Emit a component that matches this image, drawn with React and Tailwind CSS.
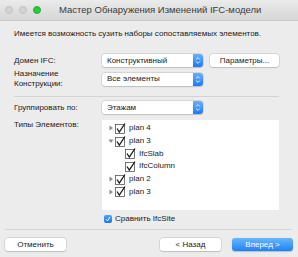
import React from "react";

const F = { fontFamily: '"Liberation Sans", Arial, sans-serif' };

function Stepper() {
  return (
    <div className="h-full w-[10px] rounded-r-[3px] bg-gradient-to-b from-[#69b1fa] to-[#1a78f5] flex items-center justify-center">
      <svg width="6" height="9" viewBox="0 0 6 9">
        <path d="M1.2 3.4 L3 1.6 L4.8 3.4" stroke="white" strokeWidth="0.9" fill="none" />
        <path d="M1.2 5.6 L3 7.4 L4.8 5.6" stroke="white" strokeWidth="0.9" fill="none" />
      </svg>
    </div>
  );
}

function Select({ text }) {
  return (
    <div className="flex h-[13px] w-[101px] items-center rounded-[3px] bg-white shadow-[0_0_0_0.5px_#c4c4c4,0_0.5px_1px_rgba(0,0,0,0.2)]">
      <div className="flex-1 pl-[5px] text-[8px] leading-none text-[#222]">{text}</div>
      <Stepper />
    </div>
  );
}

function TreeCheck() {
  return (
    <svg width="11" height="11" viewBox="0 0 11 11" className="shrink-0">
      <rect x="0.5" y="1.5" width="9" height="9" fill="white" stroke="#555" strokeWidth="0.8" />
      <path d="M2 5.5 L4.3 9 L10 0.5" stroke="#1a1a1a" strokeWidth="1.3" fill="none" />
    </svg>
  );
}

function Arrow({ open }) {
  return (
    <svg width="6" height="6" viewBox="0 0 6 6" className="shrink-0">
      {open ? (
        <path d="M0.5 1.5 L5.5 1.5 L3 5 Z" fill="#8a8a8a" />
      ) : (
        <path d="M1.5 0.5 L5 3 L1.5 5.5 Z" fill="#8a8a8a" />
      )}
    </svg>
  );
}

function Row({ open, label, child }) {
  return (
    <div className={`flex h-[12.7px] items-center ${child ? "pl-[23px]" : "pl-[6px]"}`}>
      {!child && <Arrow open={open} />}
      <div className={child ? "" : "ml-[1px]"}>
        <TreeCheck />
      </div>
      <span className="ml-[3px] text-[8px] leading-none text-[#222]">{label}</span>
    </div>
  );
}

function Btn({ children, className = "" }) {
  return (
    <div
      className={`flex h-[13px] w-[61px] items-center justify-center rounded-[3px] bg-white text-[8px] leading-none text-[#222] shadow-[0_0_0_0.5px_#c4c4c4,0_0.5px_1px_rgba(0,0,0,0.2)] ${className}`}
    >
      {children}
    </div>
  );
}

export default function App() {
  return (
    <div style={F} className="h-[257px] w-[298px] overflow-hidden bg-[#ececec]">
      {/* title bar */}
      <div className="flex h-[21px] items-center bg-gradient-to-b from-[#ebebeb] to-[#d6d6d6] border-b border-[#c8c8c8]">
        <div className="ml-[5px] flex gap-[6px]">
          <div className="h-[8px] w-[8px] rounded-full bg-[#d3d3d3] border border-[#c2c2c2]" />
          <div className="h-[8px] w-[8px] rounded-full bg-[#d3d3d3] border border-[#c2c2c2]" />
          <div className="h-[8px] w-[8px] rounded-full bg-[#2ac940] border border-[#22b436]" />
        </div>
        <div className="ml-[18px] text-[9.5px] leading-none text-[#3a3a3a]">
          Мастер Обнаружения Изменений IFC-модели
        </div>
      </div>

      <div className="pl-[14px] pt-[8px] text-[8px] leading-[9px] text-[#1a1a1a]">
        Имеется возможность сузить наборы сопоставляемых элементов.
      </div>

      {/* row 1 */}
      <div className="mt-[16px] flex items-center pl-[14px]">
        <div className="w-[88px] text-[8px] leading-none text-[#1a1a1a]">Домен IFC:</div>
        <Select text="Конструктивный" />
        <Btn className="ml-[7px] w-[69px]">Параметры...</Btn>
      </div>

      {/* row 2 */}
      <div className="mt-[2px] flex items-center pl-[14px]">
        <div className="w-[88px] text-[8px] leading-[10px] text-[#1a1a1a]">
          Назначение
          <br />
          Конструкции:
        </div>
        <Select text="Все элементы" />
      </div>

      <div className="mx-[14px] mt-[7px] h-px bg-[#d4d4d4] w-[265px]" />

      {/* row 3 */}
      <div className="mt-[4px] flex items-center pl-[14px]">
        <div className="w-[88px] text-[8px] leading-none text-[#1a1a1a]">Группировать по:</div>
        <Select text="Этажам" />
      </div>

      {/* tree */}
      <div className="mt-[6px] flex pl-[14px]">
        <div className="w-[88px] pt-[1px] text-[8px] leading-none text-[#1a1a1a]">Типы Элементов:</div>
        <div className="h-[90px] w-[177px] bg-white pt-[2px]">
          <Row label="plan 4" />
          <Row label="plan 3" open />
          <Row label="IfcSlab" child />
          <Row label="IfcColumn" child />
          <Row label="plan 2" />
          <Row label="plan 3" />
        </div>
      </div>

      {/* compare */}
      <div className="mt-[5px] flex items-center pl-[104px]">
        <div className="flex h-[8px] w-[8px] items-center justify-center rounded-[2px] bg-gradient-to-b from-[#4aa3fb] to-[#1677f3]">
          <svg width="6" height="6" viewBox="0 0 6 6">
            <path d="M1 3.2 L2.5 4.8 L5 1" stroke="white" strokeWidth="1" fill="none" />
          </svg>
        </div>
        <span className="ml-[3px] text-[8px] leading-none text-[#1a1a1a]">Сравнить IfcSite</span>
      </div>

      <div className="ml-[5px] mt-[6px] h-px w-[287px] bg-[#d4d4d4]" />

      {/* buttons */}
      <div className="mt-[8px] flex items-center pl-[5px]">
        <Btn>Отменить</Btn>
        <Btn className="ml-[94px]">&lt; Назад</Btn>
        <div className="ml-[11px] flex h-[13px] w-[61px] items-center justify-center rounded-[3px] bg-gradient-to-b from-[#67b5fb] to-[#1b82fa] text-[8px] leading-none text-white shadow-[0_0.5px_1px_rgba(0,0,0,0.2)]">
          Вперед &gt;
        </div>
      </div>
    </div>
  );
}
